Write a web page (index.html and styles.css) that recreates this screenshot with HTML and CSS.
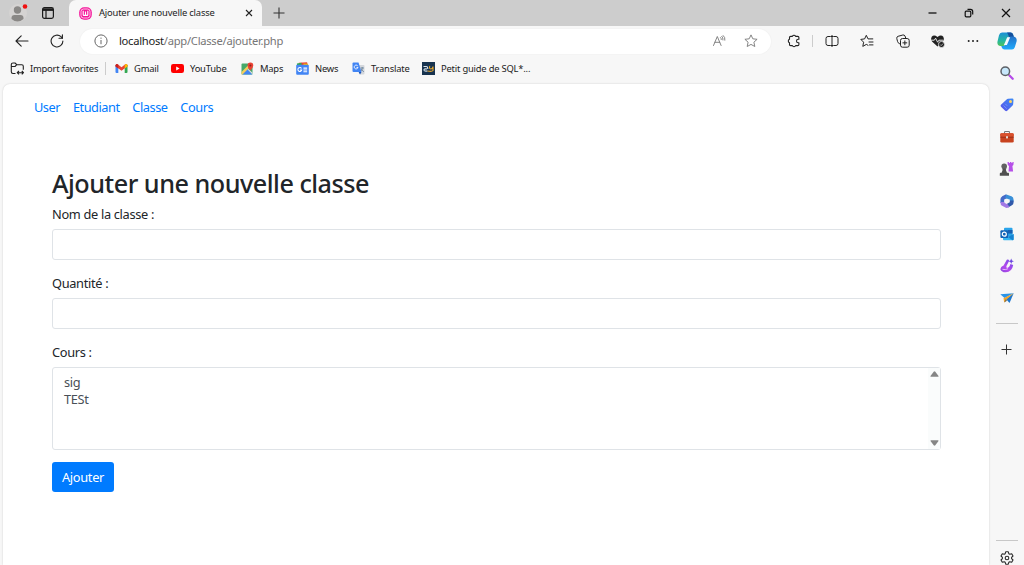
FILE: index.html
```html
<!DOCTYPE html>
<html lang="fr">
<head>
    <meta charset="UTF-8">
    <meta name="viewport" content="width=device-width, initial-scale=1.0">
    <title>Ajouter une nouvelle classe</title>
    <link rel="stylesheet" href="styles.css">
</head>
<body>
    <div class="titlebar">
        <div class="profile">
            <svg width="20" height="22" viewBox="0 0 20 22"><circle cx="10" cy="13" r="9" fill="#d5d3d2"/><circle cx="9.500" cy="10" r="3.700" fill="#8a8886"/><path d="M3.500 19v-1q0-3 3-3h6q3 0 3 3v1q-6 5-12 0z" fill="#8a8886"/><circle cx="17" cy="6.500" r="2.300" fill="#f01010"/></svg>
        </div>
        <div class="workspaces">
            <svg width="12" height="12" viewBox="0 0 12 12" fill="none" stroke="#1b1b1b" stroke-width="1.200"><rect x=".6" y=".6" width="10.800" height="10.800" rx="1.800"/><path d="M1 2.600h10" stroke-width="2.600"/><path d="M4 3v8"/></svg>
        </div>
        <div class="tab">
            <svg width="13" height="13" viewBox="0 0 13 13"><rect x=".2" y=".2" width="12.600" height="12.600" rx="5" fill="#f4169b"/><rect x="2" y="2" width="9" height="9" rx="2.500" fill="none" stroke="#ffd6ee" stroke-width=".9"/><path d="M4.200 3.800v3.900q0 .7.700.7h.9q.7 0 .7-.7V4.500v3.200q0 .7.700.7h.9q.7 0 .7-.7V3.800" fill="none" stroke="#fff" stroke-width="1.100"/></svg>
            <span class="tab-title">Ajouter une nouvelle classe</span>
            <svg width="8" height="8" viewBox="0 0 8 8" stroke="#222" stroke-width="1.100"><path d="M1 1l6 6M7 1L1 7"/></svg>
        </div>
        <div class="new-tab">
            <svg width="12" height="12" viewBox="0 0 12 12" stroke="#333" stroke-width="1.100"><path d="M6 .5v11M.5 6h11"/></svg>
        </div>
        <div class="window-buttons">
            <span><svg width="9" height="10" viewBox="0 0 9 10"><path d="M.5 5h8" stroke="#111" stroke-width="1.300"/></svg></span>
            <span><svg width="10" height="10" viewBox="0 0 10 10" fill="none" stroke="#111" stroke-width="1.200"><rect x="1.200" y="3.200" width="5.600" height="5.600" rx="1"/><path d="M3.500 1.300h3q2.200 0 2.200 2.200v3"/></svg></span>
            <span><svg width="10" height="10" viewBox="0 0 10 10" stroke="#111" stroke-width="1.200"><path d="M1 1l8 8M9 1L1 9"/></svg></span>
        </div>
    </div>

    <div class="toolbar">
        <div class="nav-buttons">
            <span><svg width="14" height="12" viewBox="0 0 14 12" fill="none" stroke="#222" stroke-width="1.100" stroke-linecap="round" stroke-linejoin="round"><path d="M13 6H1M6.200 .8L1 6l5.200 5.200"/></svg></span>
            <span><svg width="14" height="14" viewBox="0 0 14 14" fill="none" stroke="#222" stroke-width="1.100" stroke-linecap="round"><path d="M12.900 7A5.900 5.900 0 1 1 11 2.700l1.300 1.400"/><path d="M12.400 .8v3.500H9"/></svg></span>
        </div>
        <div class="address">
            <svg width="14" height="14" viewBox="0 0 14 14" fill="none" stroke="#666" stroke-width="1"><circle cx="7" cy="7" r="6.100"/><path d="M7 6v4.200M7 3.600v1.200"/></svg>
            <span class="url"><b>localhost</b>/app/Classe/ajouter.php</span>
            <svg class="read" width="14" height="13" viewBox="0 0 14 13" fill="none" stroke="#777" stroke-width=".9" stroke-linecap="round"><path d="M1.500 10.500L5.300 1.500l3.800 9M2.900 7.300h4.800M8.500 2.500q.9.800.8 2M9.800 1.300q1.500 1.300 1.200 3.700M11.200.5q2.200 1.700 1.700 4.700"/></svg>
            <svg width="14" height="14" viewBox="0 0 14 14" fill="none" stroke="#777" stroke-width=".9" stroke-linejoin="round"><path d="M7 .9l1.800 3.900 4.300.5-3.200 2.900.9 4.300L7 10.400l-3.800 2.100.9-4.300L.9 5.300l4.300-.5z"/></svg>
        </div>
        <div class="tools">
            <span class="tool"><svg width="14" height="14" viewBox="0 0 14 14" fill="none" stroke="#222" stroke-width="1.100" stroke-linejoin="round"><path d="M3.700 2.400h1.700a1.700 1.700 0 0 1 3.200 0h2.100q1.200 0 1.200 1.200v1.600h-.6a1.800 1.800 0 0 0 0 3.600h.6v1.600q0 1.200-1.200 1.200H8.600a1.700 1.700 0 0 1-3.200 0H3.700q-1.200 0-1.200-1.200V8.700a1.800 1.800 0 0 1 0-3.400V3.600q0-1.200 1.200-1.200z"/></svg></span>
            <i class="divider"></i>
            <span class="tool"><svg width="14" height="14" viewBox="0 0 14 14" fill="none" stroke="#222"><path d="M5.500 2.500H3Q1 2.500 1 4.500v5q0 2 2 2h2.500M8.500 2.500H11q2 0 2 2v5q0 2-2 2H8.500"/><path d="M5.500 2.500H7M7 2.500h1.500M5.500 11.500h3"/><path d="M7 1v12"/></svg></span>
            <span class="tool"><svg width="14" height="14" viewBox="0 0 14 14" fill="none" stroke="#222" stroke-linejoin="round" stroke-linecap="round"><path d="M12.800 4.900H8L6.300 1.300 4.600 4.900.8 5.400l2.800 2.800-.8 4.200 3.500-2 1.700.9M9 8h4M9.500 10.900H13"/></svg></span>
            <span class="tool"><svg width="14" height="14" viewBox="0 0 14 14" fill="none" stroke="#222" stroke-linejoin="round"><rect x="4.500" y="4.500" width="8.700" height="8.700" rx="2"/><path d="M8.850 6.500v4.700M6.500 8.850h4.700M4.500 10.200l-1.300-.7Q2 9 1.600 7.600L.8 4.600q-.4-1.800 1.300-2.300L6.800 1q1.600-.4 2.200 1l.8 2.300"/></svg></span>
            <span class="tool"><svg width="15" height="14" viewBox="0 0 15 14"><path d="M7.500 12.500L2 7.500Q.2 5 1.700 2.700 4 .3 7.500 3 11 .3 13.300 2.700q1.500 2.300-.3 4.800z" fill="#222"/><path d="M1.300 6.200h3l1.300-2 2 4 1.300-2h4.300" fill="none" stroke="#f7f7f7" stroke-width=".9"/><circle cx="11.500" cy="10.500" r="3.100" fill="#222" stroke="#f7f7f7" stroke-width=".8"/><path d="M10.100 10.500l1.100 1.100 1.800-2" stroke="#ccc" fill="none" stroke-width=".8"/></svg></span>
            <span class="tool"><svg width="12" height="4" viewBox="0 0 12 4" fill="#222"><circle cx="1.700" cy="2" r="1"/><circle cx="6" cy="2" r="1"/><circle cx="10.300" cy="2" r="1"/></svg></span>
        </div>
        <div class="copilot">
            <svg width="20" height="20" viewBox="0 0 20 20">
                <defs><linearGradient id="cp1" x1="0" y1="0" x2="0" y2="1"><stop offset="0" stop-color="#1a8fd8"/><stop offset=".6" stop-color="#25b7a0"/><stop offset="1" stop-color="#4fc35b"/></linearGradient><linearGradient id="cp2" x1="0" y1="0" x2="0" y2="1"><stop offset="0" stop-color="#2272c8"/><stop offset="1" stop-color="#20aafc"/></linearGradient></defs>
                <path d="M5 1.500h8.500q2 0 2.600 2l.6 2H12L8.500 13.500q-.7 1.500-2.400 1.500H3.500Q-.2 14.500.5 10.500L2 4.200Q2.700 1.500 5 1.500z" fill="url(#cp1)"/>
                <path d="M10 1.500h3.500q2 0 2.600 2l.8 2.500H12q-1-3.500-2-4.500z" fill="#144f9c"/>
                <path d="M14 5.500h2.500q3.500.6 3.200 4.500l-1.900 6.300Q17 18.500 15 18.500H7.500q-2 0-2.700-2L4.300 15h1.800Q7.800 15 8.500 13.500L11.200 7Q12 5.500 14 5.500z" fill="url(#cp2)"/>
                <path d="M10.200 6.200h3L9.900 14H6.900z" fill="#f7fbff"/>
            </svg>
        </div>
    </div>

    <div class="window">
        <div class="main">
            <div class="bookmarks">
                <span class="bookmark"><svg width="15" height="13" viewBox="0 0 15 13" fill="none" stroke="#222" stroke-width="1.100" stroke-linejoin="round"><path d="M5.500 11.500H3q-1.700 0-1.700-1.700V2.500Q1.300 1 3 1h2l1.800 1.700h5q1.500 0 1.500 1.500v3.500M1.300 4.500H5l1.800-1.800M7.300 10.700h6M9 9l-1.800 1.700L9 12.400M11.800 9l1.700 1.700-1.700 1.700"/></svg>Import favorites</span>
                <span class="bookmark"><svg width="13" height="13" viewBox="0 0 13 13"><path d="M.5 3h2.800v8H1.500q-1 0-1-1z" fill="#4285f4"/><path d="M9.700 3h2.800v7q0 1-1 1H9.700z" fill="#34a853"/><path d="M.5 3.200Q1 1.500 2.700 2.200L6.500 5.200l3.800-3q1.700-.7 2.200 1v1L6.500 8.800.5 4.200z" fill="#ea4335"/><path d="M9.700 2.700q2.500-1.700 2.800.8v1L9.700 6.500z" fill="#fbbc04"/><path d="M.5 3.500v.9l2.800 2.200V2.700q-2-1.500-2.800.8z" fill="#c5221f"/></svg>Gmail</span>
                <span class="bookmark"><svg width="13" height="13" viewBox="0 0 13 13"><rect y="2" width="13" height="9" rx="2.200" fill="#f00"/><path d="M5.200 4.500v4l3.400-2z" fill="#fff"/></svg>YouTube</span>
                <span class="bookmark"><svg width="13" height="13" viewBox="0 0 13 13"><rect x=".5" y="1.500" width="11" height="11" rx="1" fill="#46a96a"/><path d="M1 12.500L6.500 7l5 5.500z" fill="#4285f4"/><path d="M.5 10L9 1.500h2.500v1L1.500 12.500h-1z" fill="#f4ce5c"/><path d="M7.500 7l4 3.800v1.700l-5-5z" fill="#ddd"/><path d="M9.300 8.500Q6.500 5.500 6.500 3.400a2.800 2.800 0 0 1 5.800 0q0 2.100-3 5.100z" fill="#ea4335"/><circle cx="9.400" cy="3.400" r="1" fill="#8d2119"/></svg>Maps</span>
                <span class="bookmark"><svg width="13" height="13" viewBox="0 0 14 14"><path d="M3 .7l9-.5.5 4H3z" fill="#ea4335"/><path d="M1 1.500l5-.7v3H1z" fill="#34a853"/><path d="M8 1.500l5 .5v3H8z" fill="#fbbc04"/><rect x=".2" y="3" width="13.600" height="10.700" rx="1" fill="#4285f4"/><path d="M5.900 6.900A2.100 2.100 0 1 0 6.200 8.500H4.400M8 6.600h4M8 8.500h4M8 10.400h4" fill="none" stroke="#fff" stroke-width="1.100"/></svg>News</span>
                <span class="bookmark"><svg width="13" height="13" viewBox="0 0 13 13"><path d="M5 3h6.500q1 0 1 1v7.500q0 1-1 1H8z" fill="#d4d7dc"/><path d="M1.500 .5h5l3 9.500h-8q-1 0-1-1V1.500q0-1 1-1z" fill="#4285f4"/><path d="M6.600 10h2.900L8 12.500z" fill="#1e56b5"/><path d="M5.800 4.100A1.900 1.900 0 1 0 6 5.400H4.500" fill="none" stroke="#fff" stroke-width=".9"/><path d="M8.500 6h3.500M10.200 5v1q0 2-1.200 3M9.300 7l2.500 3" stroke="#5a7590" stroke-width=".7" fill="none"/></svg>Translate</span>
                <span class="bookmark"><svg width="13" height="13" viewBox="0 0 13 13"><path d="M0 0h13v13H0z" fill="#17334f"/><path d="M1.500 4.500h2.700q1.500 0 1.500 1.500v1M5 7q-3.300-.5-3 1.200.3 1.300 3.500.8" fill="none" stroke="#dce5ed" stroke-width="1.100"/><path d="M7.800 4q-1 2.800 1 3 1.700 0 2.200-2.500v4q-1 1.500-5.500.5" fill="none" stroke="#e4a52d" stroke-width="1.100"/></svg>Petit guide de SQL*...</span>
            </div>

            <div class="page">
                <nav class="menu">
                    <a href="#">User</a>
                    <a href="#">Etudiant</a>
                    <a href="#">Classe</a>
                    <a href="#">Cours</a>
                </nav>
                <div class="container">
                    <h2>Ajouter une nouvelle classe</h2>
                    <form>
                        <div class="form-group">
                            <label for="nom">Nom de la classe :</label>
                            <input type="text" id="nom" name="nom" class="form-control">
                        </div>
                        <div class="form-group">
                            <label for="quantite">Quantité :</label>
                            <input type="text" id="quantite" name="quantite" class="form-control">
                        </div>
                        <div class="form-group">
                            <label>Cours :</label>
                            <div class="form-control list">
                                <div class="options">
                                    <div>sig</div>
                                    <div>TESt</div>
                                </div>
                                <div class="scrollbar">
                                    <svg width="9" height="6" viewBox="0 0 9 6"><path d="M3.700.7q.8-.9 1.600 0L8.500 5q.2.8-.6.800H1.100Q.3 5.800.5 5z" fill="#858585"/></svg>
                                    <svg width="9" height="6" viewBox="0 0 9 6"><path d="M3.700 5.300q.8.900 1.600 0L8.500 1Q8.700.2 7.900.2H1.100Q.3.200.5 1z" fill="#858585"/></svg>
                                </div>
                            </div>
                        </div>
                        <button type="submit" class="btn">Ajouter</button>
                    </form>
                </div>
            </div>
        </div>

        <div class="sidebar">
            <span class="app"><svg width="14" height="14" viewBox="0 0 14 14"><path d="M8.500 8.500l1.500 1.500" stroke="#666" stroke-width="1.500"/><path d="M9.700 9.700l3 3" stroke="#b54be8" stroke-width="2.300" stroke-linecap="round"/><circle cx="5.300" cy="5.300" r="4.300" fill="#c8e8fb" stroke="#5c6066" stroke-width="1.500"/></svg></span>
            <span class="app"><svg width="14" height="14" viewBox="0 0 14 14"><defs><linearGradient id="tag" x1="1" y1="0" x2="0" y2="1"><stop offset="0" stop-color="#3c8cf5"/><stop offset="1" stop-color="#5a50e8"/></linearGradient></defs><path d="M8 .8l4.200-.3q1.300 0 1.300 1.200L13.200 6q0 .8-.6 1.400L7.200 12.800q-1 .9-2 0L1 8.800q-.9-1 0-2L6.600 1.400Q7.200.8 8 .8z" fill="url(#tag)"/><circle cx="10.500" cy="3.500" r="1.500" fill="#ffd65c"/><path d="M3.500 7.500l3.300 3.200M5.200 5.800l2 2" stroke="#7fa7ff" stroke-width=".7"/></svg></span>
            <span class="app"><svg width="14" height="14" viewBox="0 0 14 14"><path d="M4.500 4V2.300q0-.8.800-.8h3.400q.8 0 .8.800V4" fill="none" stroke="#777" stroke-width="1.100"/><rect x=".3" y="3.300" width="13.400" height="9.200" rx="1.300" fill="#c8431f"/><path d="M.3 5.800V4.600q0-1.300 1.300-1.300h10.800q1.300 0 1.300 1.300v1.200l-2 1.200H2.300z" fill="#d9502c"/><path d="M.3 7.200h13.400" stroke="#8e2b16" stroke-width=".8"/><rect x="6" y="6.200" width="2" height="2.200" fill="#e4d6cf"/></svg></span>
            <span class="app"><svg width="16" height="16" viewBox="0 0 16 16"><path d="M8.500 1h1.400v1h1V1h1.500v1h1V1h1.300l-.3 3-1 1 .7 5.500H9.500L10 5 8.800 4z" fill="#b650e8"/><circle cx="5.200" cy="5.200" r="2.800" fill="#626262"/><path d="M2.800 7.500h4.800l-.8 1.200 1.200 3.100h1.300q.7 0 .7 1v2H.8v-2q0-1 .8-1h1l1.100-3.100z" fill="#505050"/></svg></span>
            <span class="app"><svg width="14" height="14" viewBox="0 0 14 14" fill="none" stroke-width="3.700" stroke-linejoin="round"><path d="M2.300 9V5.200q0-.8.700-1.200L7 2" stroke="#456ac8"/><path d="M5.800 2.300L10.700 4q1 .5 1 1.400v2.400" stroke="#3a90d8"/><path d="M11.700 6.500v2q0 .8-.7 1.200l-3.800 2.100" stroke="#3159aa"/><path d="M8.500 11.500q-1.500.9-2.600.2L2.500 9.800V8" stroke="#a279e5"/></svg></span>
            <span class="app"><svg width="14" height="14" viewBox="0 0 14 14"><rect x="4" y=".7" width="8.500" height="9" rx="1" fill="#2aa4ea"/><path d="M8 3h4.500v3.500H8z" fill="#185fb0"/><path d="M3 7l5.500 3L13.600 7v5.300q0 1-1 1H4q-1 0-1-1z" fill="#35b5ef"/><path d="M13.600 7v5.300q0 1-1 1L8 10z" fill="#1683d2"/><rect x=".4" y="3.300" width="7.800" height="7.800" rx="1" fill="#0f63b7"/><circle cx="4.300" cy="7.200" r="2" fill="none" stroke="#fff" stroke-width="1.200"/></svg></span>
            <span class="app"><svg width="14" height="15" viewBox="0 0 14 15"><defs><linearGradient id="dsg" x1="1" y1="0" x2="0" y2="1"><stop offset="0" stop-color="#6a4de8"/><stop offset=".6" stop-color="#b549ed"/><stop offset="1" stop-color="#8a48dd"/></linearGradient></defs><path d="M6.800 1.700L3.600 7.500Q.6 8.500.4 11.500q1.500 3 5.400 2.800 6.200-.3 7.400-7.300l-2.800-.9Q9.600 9.800 7 9.900 5.800 9.200 6.600 7.700l2.600-4.900Q8.600.7 6.800 1.700z" fill="url(#dsg)"/><path d="M2.500 11.300q3 .8 5.500-.6" stroke="#e8b5fb" fill="none"/><path d="M11.200.5l.8 1.900 1.900.8-1.900.8-.8 1.900-.8-1.900-1.900-.8 1.900-.8z" fill="#6c48df"/></svg></span>
            <span class="app"><svg width="14" height="14" viewBox="0 0 14 14"><path d="M.3 3.300l13.400-1L4.500 7z" fill="#2a94e8"/><path d="M13.700 2.300L9.500 12 6 8z" fill="#1c78d0"/><path d="M13.700 2.300L3.500 7.200l.7 4.300 2-2.700z" fill="#f3a62b"/><path d="M4.200 11.500l2.700-1.700L6 8z" fill="#6b5938"/></svg></span>
            <hr>
            <span class="add"><svg width="11" height="11" viewBox="0 0 11 11" stroke="#333"><path d="M5.500 .5v10M.5 5.500h10"/></svg></span>
            <div class="settings">
                <hr>
                <span><svg width="14" height="14" viewBox="0 0 14 14" fill="none" stroke="#2b2b2b" stroke-width="1.100" stroke-linejoin="round"><path d="M5.700.8h2.600l.5 1.900 1 .6 1.900-.6L13 5l-1.400 1.400v1.200L13 9l-1.300 2.300-1.900-.6-1 .6-.5 1.900H5.700l-.5-1.900-1-.6-1.900.6L1 9l1.400-1.400V6.400L1 5l1.300-2.300 1.900.6 1-.6z"/><circle cx="7" cy="7" r="1.800"/></svg></span>
            </div>
        </div>
    </div>
</body>
</html>
```

FILE: styles.css
```css
* {
    box-sizing: border-box;
}
body {
    margin: 0;
    height: 565px;
    display: flex;
    flex-direction: column;
    overflow: hidden;
    background: #f7f7f7;
    font-family: "Segoe UI", "Noto Sans", sans-serif;
    color: #212529;
}
svg {
    display: block;
    flex: none;
}

/* Barre de titre */
.titlebar {
    height: 26px;
    flex: none;
    display: flex;
    background: #cdcdcd;
}
.profile {
    width: 36px;
    padding-left: 8px;
}
.workspaces {
    width: 33px;
    padding: 7px 0 0 6px;
}
.tab {
    width: 193px;
    display: flex;
    align-items: center;
    padding: 0 9px 0 10px;
    background: #f7f7f7;
    border-radius: 7px 7px 0 0;
}
.tab-title {
    flex: 1;
    margin: -1px 0 0 7px;
    font-size: 9.4px;
    letter-spacing: -0.18px;
    white-space: nowrap;
    color: #222;
}
.new-tab {
    padding: 7px 0 0 11px;
}
.window-buttons {
    display: flex;
    margin-left: auto;
}
.window-buttons span {
    width: 36.5px;
    display: flex;
    align-items: center;
    justify-content: center;
}

/* Barre d'adresse */
.toolbar {
    height: 31px;
    flex: none;
    display: flex;
    align-items: center;
    padding-bottom: 1px;
}
.nav-buttons {
    width: 80px;
    display: flex;
    gap: 21px;
    align-items: center;
    padding-left: 15px;
}
.address {
    width: 691px;
    height: 25px;
    display: flex;
    align-items: center;
    padding: 0 13px 0 14px;
    background: #fff;
    border-radius: 13px;
    box-shadow: 0 0 2px rgba(0,0,0,0.06);
}
.url {
    flex: 1;
    margin: -1px 0 0 11px;
    font-size: 11.2px;
    letter-spacing: -0.27px;
    color: #767676;
}
.url b {
    font-weight: normal;
    color: #1b1b1b;
}
.read {
    margin-right: 18px;
}
.tools {
    width: 220px;
    display: flex;
    align-items: center;
    padding-left: 5px;
}
.tool {
    flex: 1;
    display: flex;
    justify-content: center;
}
.divider {
    width: 1px;
    height: 12px;
    margin: 0 1px;
    background: #ccc;
}
.copilot {
    width: 31px;
    display: flex;
    justify-content: center;
}

.window {
    flex: 1;
    min-height: 0;
    display: flex;
}
.main {
    width: 989px;
    display: flex;
    flex-direction: column;
}
.bookmarks {
    height: 27px;
    flex: none;
    display: grid;
    grid-template-columns: 105px 56px 70px 55px 56px 70px auto;
    padding-left: 10px;
    padding-bottom: 4px;
    font-size: 9.4px;
    letter-spacing: -0.2px;
    color: #222;
}
.bookmark {
    display: flex;
    align-items: center;
    gap: 6px;
    white-space: nowrap;
}
.bookmark:first-child {
    gap: 5px;
    height: 13px;
    margin: 5px 9px 0 0;
    border-right: 1px solid #ccc;
}

/* Page */
.page {
    flex: 1;
    margin-left: 3px;
    background: #fff;
    border-radius: 7px 7px 0 0;
    box-shadow: 0 0 2px rgba(0,0,0,0.18);
    font-size: 12.8px;
    line-height: 19px;
    letter-spacing: -0.32px;
}
.menu {
    display: flex;
    gap: 12.8px;
    padding: 14px 0 0 31px;
    letter-spacing: -0.48px;
}
.menu a {
    color: #007bff;
    text-decoration: none;
}
.container {
    padding: 51px 48px 0 49px;
}
h2 {
    margin: 0 0 6px;
    font-size: 25.2px;
    font-weight: 500;
    line-height: 31px;
    letter-spacing: -0.49px;
}
.form-group {
    margin-bottom: 14px;
}
.form-group:last-of-type {
    margin-bottom: 12px;
}
label {
    display: block;
    margin-bottom: 5px;
}
.form-control {
    display: block;
    width: 100%;
    height: 31px;
    border: 1px solid #dfe3e7;
    border-radius: 3px;
    background: #fff;
    color: #495057;
}
.list {
    height: 83px;
    display: flex;
    justify-content: space-between;
    line-height: 17px;
}
.options {
    padding: 6px 0 0 11px;
}
.scrollbar {
    width: 12px;
    display: flex;
    flex-direction: column;
    align-items: center;
    justify-content: space-between;
    padding: 3px 0;
    background: #fafcfc;
}
.btn {
    display: block;
    width: 62px;
    height: 30px;
    padding: 1px 0 0;
    border: none;
    border-radius: 3px;
    background: #007bff;
    color: #fff;
    font: inherit;
    letter-spacing: inherit;
}

/* Barre laterale */
.sidebar {
    width: 35px;
    display: flex;
    flex-direction: column;
    align-items: center;
}
.app {
    height: 32.1px;
    display: flex;
    align-items: center;
}
hr {
    width: 22px;
    height: 1px;
    margin: 9px 0 0;
    border: none;
    background: #c8c8c8;
}
.add {
    margin-top: 20px;
}
.settings {
    margin-top: auto;
    display: flex;
    flex-direction: column;
    align-items: center;
    gap: 10px;
}
```
